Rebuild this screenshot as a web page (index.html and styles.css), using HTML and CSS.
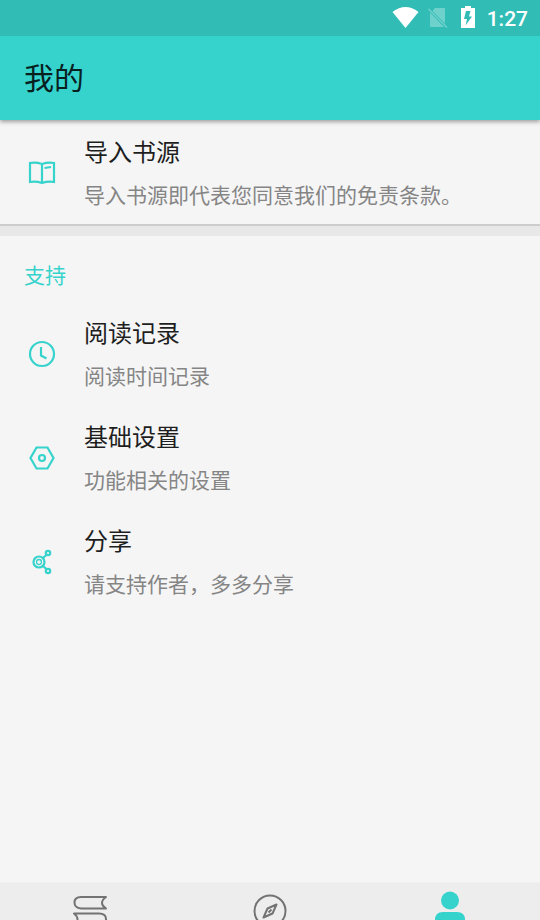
FILE: index.html
```html
<!DOCTYPE html>
<html lang="zh-CN">
<head>
<meta charset="utf-8">
<meta name="viewport" content="width=device-width, initial-scale=1">
<title>我的</title>
<link rel="stylesheet" href="styles.css">
</head>
<body>
<div class="status">
  <svg class="status-icon wifi" viewBox="0 0 28 24" aria-hidden="true"><path d="M0.500 6Q13.500-4 26.500 6L13.500 22Z" fill="#fff"/></svg>
  <svg class="status-icon sim" viewBox="0 0 20 24" aria-hidden="true"><path d="M7 2H16Q17 2 17 3V17.500L4.500 5ZM2 6.500L16 21H3Q2 21 2 20Z" fill="#fff"/><path d="M0.500 3L19 21.500" stroke="#fff" stroke-width="1.500"/></svg>
  <svg class="status-icon battery" viewBox="0 0 14 24" aria-hidden="true"><path d="M0 2H4V0H10V2H14V22H0Z" fill="#fff"/><path d="M9.500 5H5L3 13H6L4.500 19.500L11 10.500H8Z" fill="#31bdb6"/></svg>
  <time class="clock">1:27</time>
</div>
<header class="appbar"><h1>我的</h1></header>
<main class="content">
  <a class="row" href="#source">
    <svg class="row-icon" viewBox="0 0 36 36" aria-hidden="true"><path d="M6 9Q12 8 18 10Q24 8 30 9V28Q24 27 18 29Q12 27 6 28ZM18 10V29M20.500 14L27 13"/></svg>
    <span class="row-text"><span class="row-title">导入书源</span><span class="row-note">导入书源即代表您同意我们的免责条款。</span></span>
  </a>
  <section class="group">
    <h2>支持</h2>
    <a class="row" href="#history">
      <svg class="row-icon" viewBox="0 0 36 36" aria-hidden="true"><circle cx="18" cy="19" r="12"/><path d="M17 12V20.500L22.500 23.500"/></svg>
      <span class="row-text"><span class="row-title">阅读记录</span><span class="row-note">阅读时间记录</span></span>
    </a>
    <a class="row" href="#settings">
      <svg class="row-icon" viewBox="0 0 36 36" aria-hidden="true"><path d="M12.500 8.500H23.500L29.500 19L23.500 29.500H12.500L6.500 19Z"/><circle cx="18" cy="19" r="3"/></svg>
      <span class="row-text"><span class="row-title">基础设置</span><span class="row-note">功能相关的设置</span></span>
    </a>
    <a class="row" href="#share">
      <svg class="row-icon" viewBox="0 0 36 36" aria-hidden="true"><circle cx="15" cy="19" r="5.500"/><circle cx="15" cy="19" r="2.500" stroke-width="1.300"/><circle cx="24" cy="10" r="2.200"/><circle cx="24" cy="28" r="2.200"/><path d="M19 15L22.300 12M19 23L22.300 26"/></svg>
      <span class="row-text"><span class="row-title">分享</span><span class="row-note">请支持作者，多多分享</span></span>
    </a>
  </section>
</main>
<nav class="tabs">
  <a href="#shelf" aria-label="书架"><svg viewBox="0 0 36 36" aria-hidden="true"><path d="M34 5H9Q2.500 5 2.500 10.500T9 16.500H34Q26 11 34 5ZM2 21.500H27Q34 21.500 34 27T27 33H2Q9 27 2 21.500Z"/></svg></a>
  <a href="#discover" aria-label="发现"><svg viewBox="0 0 36 36" aria-hidden="true"><circle cx="18" cy="19" r="15.500"/><path d="M24.500 12.500L20.500 21.500L11.500 25.500L15.500 16.500ZM16.500 20.500L19.500 17.500"/></svg></a>
  <a class="active" href="#me" aria-label="我的" aria-current="page"><svg viewBox="0 0 36 36" aria-hidden="true"><circle cx="18" cy="8.500" r="9"/><path d="M3 34V28Q3 20 11 20H25Q33 20 33 28V34Z"/></svg></a>
</nav>
</body>
</html>
```
FILE: styles.css
```css
* { box-sizing: border-box; }
body {
  margin: 0;
  height: 100vh;
  display: flex;
  flex-direction: column;
  overflow: hidden;
  background: #f5f5f5;
  color: #1e1e1e;
  font-family: Roboto, "Noto Sans CJK SC", sans-serif;
}
a { color: inherit; text-decoration: none; }
.status {
  flex: none;
  height: 36px;
  display: flex;
  align-items: center;
  justify-content: flex-end;
  padding-right: 12px;
  background: #31bdb6;
  color: #fff;
}
.status-icon { height: 24px; }
.wifi { width: 28px; margin-right: 8px; }
.sim { width: 20px; margin-right: 13px; opacity: .3; }
.battery { width: 14px; margin-right: 12px; }
.clock { font-size: 21px; font-weight: 500; line-height: 24px; padding-top: 2px; }
.appbar {
  flex: none;
  height: 84px;
  padding: 2px 24px 0;
  display: flex;
  align-items: center;
  background: #36d3cc;
  box-shadow: 0 2px 4px rgba(0, 0, 0, .35);
  clip-path: inset(0 0 -8px);
  z-index: 1;
}
h1 { margin: 0; font-size: 30px; font-weight: 400; line-height: 44px; color: #08201f; }
.content { flex: 1; min-height: 0; overflow: hidden; }
.row { display: flex; padding: 15px 24px 12px; gap: 24px; }
.row-icon {
  flex: none;
  width: 36px;
  height: 36px;
  margin-top: 19px;
  fill: none;
  stroke: #36d3cc;
  stroke-width: 2.2;
}
.row-text { display: flex; flex-direction: column; gap: 9px; }
.row-title { font-size: 24px; line-height: 36px; }
.row-note { font-size: 21px; line-height: 32px; color: #858585; }
.group { border-top: 2px solid #ccc; }
.group::before { content: ""; display: block; height: 10px; background: #e8e8e8; }
h2 { margin: 0; padding: 24px 24px 9px; font-size: 21px; font-weight: 400; line-height: 32px; color: #36d3cc; }
.tabs {
  flex: none;
  height: 38px;
  display: grid;
  grid-template-columns: repeat(3, 1fr);
  overflow: hidden;
  background: #ededed;
  border-top: 1px solid #f0f0f0;
}
.tabs a { display: flex; justify-content: center; padding-top: 9px; }
.tabs svg { flex: none; width: 36px; height: 36px; overflow: visible; fill: none; stroke: #737373; stroke-width: 2; stroke-linejoin: round; }
.tabs .active svg { fill: #36d3cc; stroke: none; }
```
